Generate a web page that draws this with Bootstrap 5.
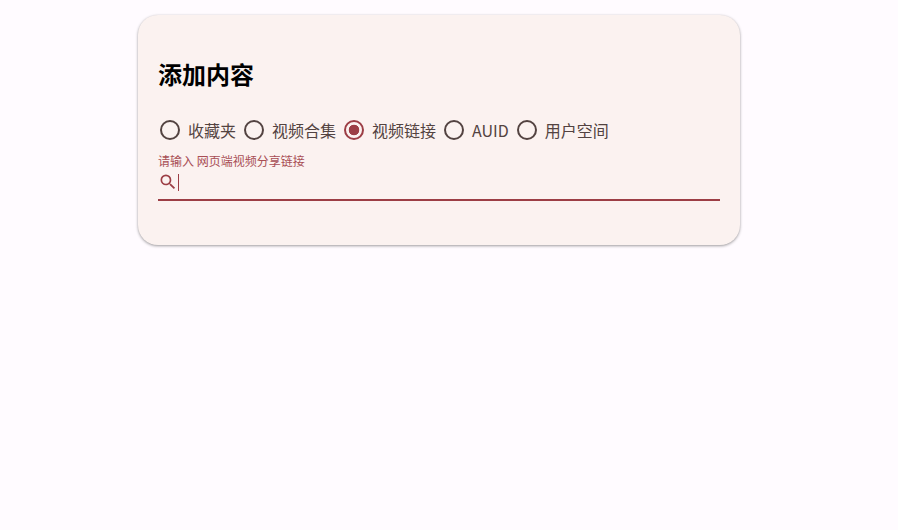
<!DOCTYPE html>
<html lang="zh">
<head>
<meta charset="utf-8">
<title>添加内容</title>
<link href="https://cdn.jsdelivr.net/npm/bootstrap@5.3.0/dist/css/bootstrap.min.css" rel="stylesheet">
<style>
html, body { height: 100%; }
body { background: #fffbff; font-family: "Noto Sans CJK SC", "Noto Sans", sans-serif; overflow: hidden; }
.add-panel { width: 602px; height: 230px; margin: 15px 0 0 138px; padding: 41px 20px 0; background: #fbf2f0; border-radius: 20px; box-shadow: 0 1px 3px rgba(0,0,0,.38), 0 0 2px rgba(0,0,0,.04); border: 0; }
.add-title { font-size: 24px; line-height: 36px; font-weight: 700; color: #000; margin: 0 0 22px; }
.kind-row { height: 32px; gap: 8px; margin-bottom: 7px; padding-left: 2px; }
.kind-item { gap: 8px; margin: 0; padding: 0; min-height: 0; color: #534341; font-size: 16px; line-height: 24px; }
.kind-item .form-check-input { float: none; width: 20px; height: 20px; margin: 0; background: transparent; border: 2px solid #534341; border-radius: 50%; box-shadow: none; }
.kind-item .form-check-input:checked { border-color: #9c3e45; background: radial-gradient(circle, #9c3e45 0 5px, transparent 5.6px); }
.search-field { width: 562px; border-bottom: 2px solid #9c3e45; height: 48px; }
.search-hint { display: block; font-size: 12px; line-height: 16px; color: #a84e55; margin: 0; }
.search-line { height: 30px; padding-bottom: 4px; }
.search-icon { width: 20px; height: 20px; flex: none; }
.search-caret { width: 1px; height: 17px; background: #9c3e45; flex: none; }
.search-input { border: 0; outline: 0; background: transparent; flex: 1; min-width: 0; padding: 0; font-size: 16px; color: #201a19; }
</style>
</head>
<body>
<main class="card add-panel">
  <h1 class="add-title">添加内容</h1>
  <div class="d-flex align-items-center kind-row" role="radiogroup">
    <label class="form-check d-flex align-items-center kind-item"><input class="form-check-input" type="radio" name="kind"><span>收藏夹</span></label>
    <label class="form-check d-flex align-items-center kind-item"><input class="form-check-input" type="radio" name="kind"><span>视频合集</span></label>
    <label class="form-check d-flex align-items-center kind-item"><input class="form-check-input" type="radio" name="kind" checked><span>视频链接</span></label>
    <label class="form-check d-flex align-items-center kind-item"><input class="form-check-input" type="radio" name="kind"><span>AUID</span></label>
    <label class="form-check d-flex align-items-center kind-item"><input class="form-check-input" type="radio" name="kind"><span>用户空间</span></label>
  </div>
  <div class="search-field">
    <label class="search-hint" for="q">请输入 网页端视频分享链接</label>
    <div class="d-flex align-items-center search-line">
      <svg class="search-icon" viewBox="0 0 24 24" fill="#9c3e45"><path d="M15.5 14h-.79l-.28-.27A6.47 6.47 0 0 0 16 9.5 6.5 6.5 0 1 0 9.5 16c1.61 0 3.09-.59 4.23-1.57l.27.28v.79l5 4.99L20.49 19l-4.99-5zm-6 0C7.01 14 5 11.99 5 9.500S7.010 5 9.500 5 14 7.010 14 9.500 11.990 14 9.500 14z"/></svg>
      <span class="search-caret"></span>
      <input id="q" class="search-input" type="text">
    </div>
  </div>
</main>
<script src="https://cdn.jsdelivr.net/npm/bootstrap@5.3.0/dist/js/bootstrap.bundle.min.js"></script>
</body>
</html>
